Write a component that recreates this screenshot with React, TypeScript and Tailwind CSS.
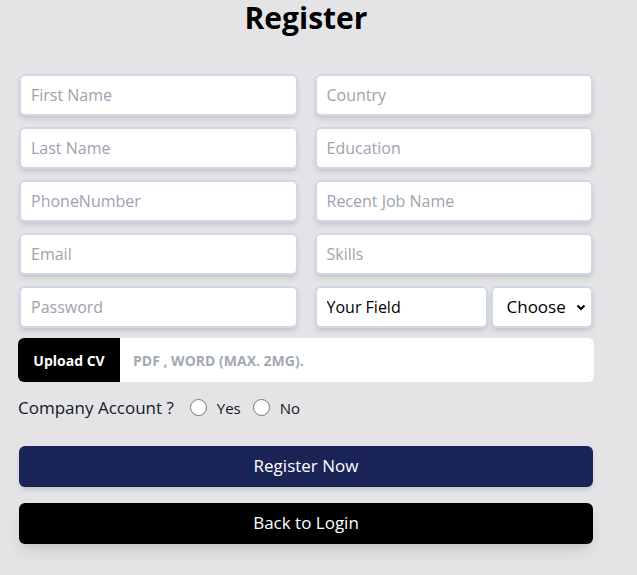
const left = ["First Name", "Last Name", "PhoneNumber", "Email", "Password"];
const right = ["Country", "Education", "Recent Job Name", "Skills"];

const base =
  "h-[42px] rounded-md border-2 border-[#cfd8e6] bg-white px-[10px] text-[16px] text-black shadow-md outline-none placeholder:text-[#9ca3af]";

export default function App() {
  return (
    <div className="min-h-[575px] w-full bg-[#e4e4e7] font-['Open_Sans',sans-serif]">
      <div className="ml-[18px] w-[576px]">
        <h1 className="text-center text-[30px] font-bold leading-[36px] text-black">Register</h1>

        <div className="mt-[38px] grid grid-cols-2 gap-x-[17px] gap-y-[11px] px-px">
          {left.map((l, i) => (
            <div key={l} className="contents">
              <input className={base + " w-full"} placeholder={l} />
              {i < 4 ? (
                <input className={base + " w-full"} placeholder={right[i]} />
              ) : (
                <div className="flex gap-[3px]">
                  <input className={base + " w-[173px] flex-none"} defaultValue="Your Field" />
                  <div className="relative min-w-0 flex-1">
                    <select className="h-[42px] w-full appearance-none rounded-md border-2 border-[#cfd8e6] bg-white pl-[14px] text-[17px] text-black shadow-md outline-none">
                      <option>Choose</option>
                    </select>
                    <svg
                      className="pointer-events-none absolute right-[7px] top-[18px]"
                      width="10"
                      height="7"
                      viewBox="0 0 10 7"
                    >
                      <path d="M1.5 1.5 5 5 8.5 1.5" fill="none" stroke="black" strokeWidth="2" />
                    </svg>
                  </div>
                </div>
              )}
            </div>
          ))}
        </div>

        <div className="mt-[10px] flex h-[44px] overflow-hidden rounded-md bg-white">
          <div className="flex w-[102px] items-center justify-center bg-black text-[14px] font-bold text-white">
            Upload CV
          </div>
          <div className="flex items-center pl-[13px] text-[14px] font-bold text-[#a3a8b3]">
            PDF , WORD (MAX. 2MG).
          </div>
        </div>

        <div className="mt-[13px] flex items-center text-[#111827]">
          <span className="text-[17px]">Company Account ?</span>
          <span className="ml-[16px] h-[17px] w-[17px] rounded-full border border-[#767676] bg-white" />
          <span className="ml-[10px] text-[15px]">Yes</span>
          <span className="ml-[12px] h-[17px] w-[17px] rounded-full border border-[#767676] bg-white" />
          <span className="ml-[10px] text-[15px]">No</span>
        </div>

        <div className="mt-[25px] flex flex-col gap-[16px] px-px">
          <button className="h-[41px] w-full rounded-md bg-[#1a2456] text-[17px] text-white shadow-md">
            Register Now
          </button>
          <button className="h-[41px] w-full rounded-md bg-black text-[17px] text-white shadow-lg">
            Back to Login
          </button>
        </div>
      </div>
    </div>
  );
}
